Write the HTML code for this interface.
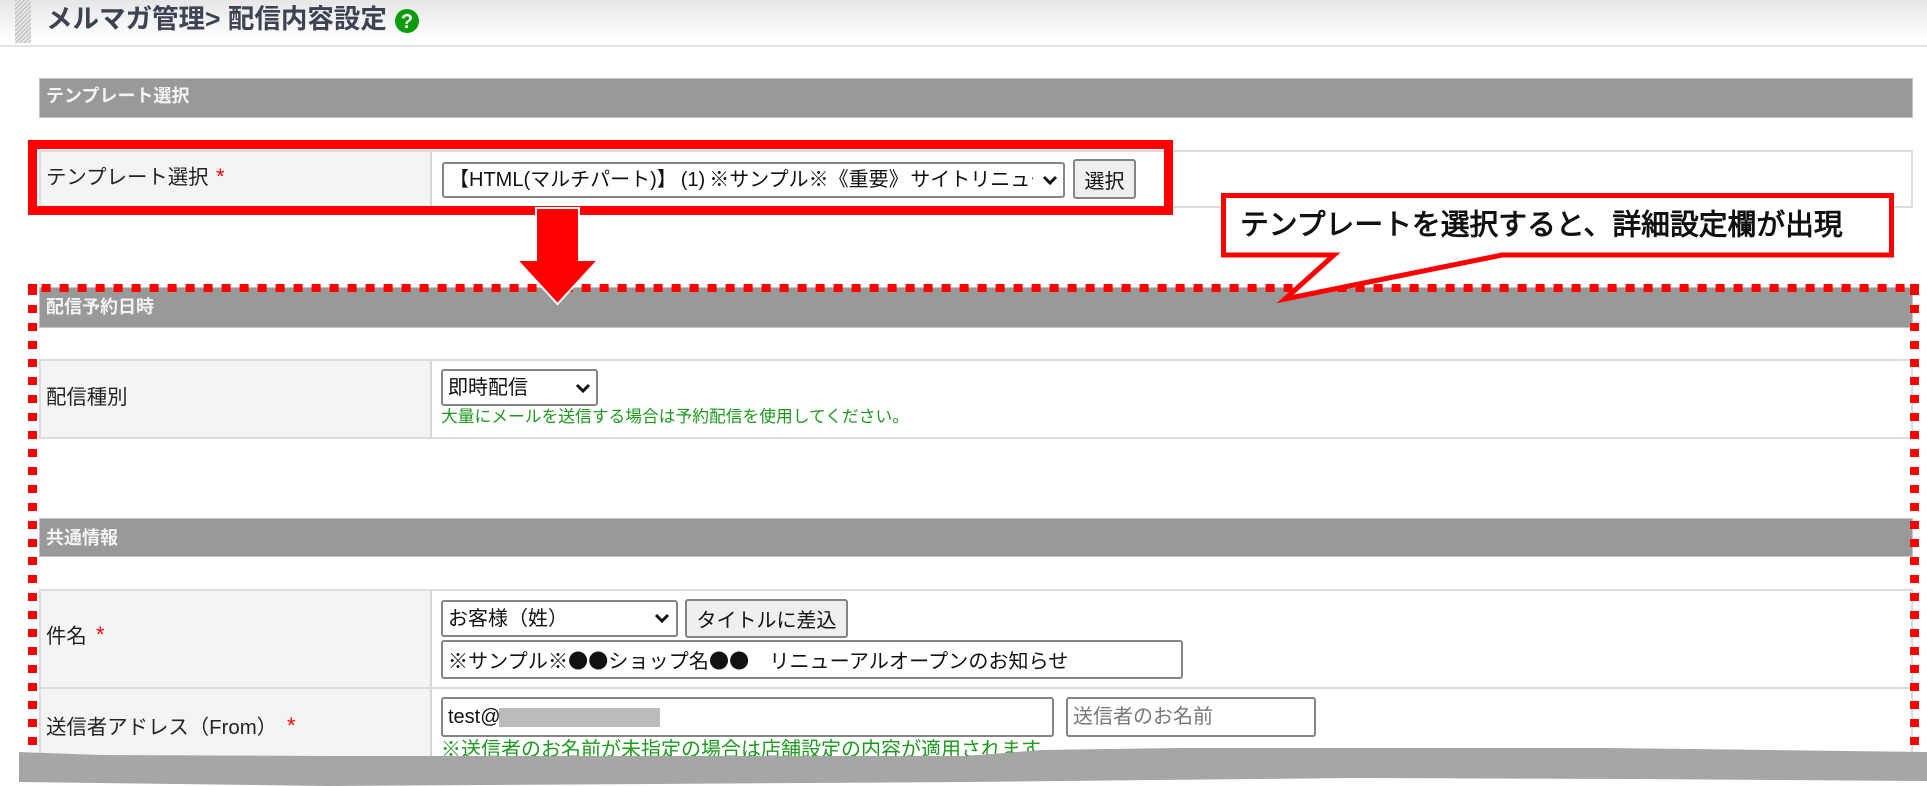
<!DOCTYPE html>
<html lang="ja">
<head>
<meta charset="utf-8">
<title>メルマガ管理</title>
<style>
html,body{margin:0;padding:0;background:#fff}
body{position:relative;width:1927px;height:786px;overflow:hidden;font-family:"Liberation Sans","Noto Sans CJK JP",sans-serif;color:#222}
.a{position:absolute;box-sizing:border-box}
.t{position:absolute;white-space:nowrap;height:30px;line-height:30px;font-size:20px}
.l{font-size:20.4px}
.bar{position:absolute;left:39px;width:1874px;background:#999;border:1px solid #c4c4c4;box-sizing:border-box}
.bt{position:absolute;left:46px;white-space:nowrap;height:30px;line-height:30px;font-size:18px;font-weight:bold;color:#f4f4f4}
.row{position:absolute;left:39px;width:1874px;border:2px solid #dcdcdc;box-sizing:border-box;background:#fff}
.lab{position:absolute;left:0;top:0;bottom:0;width:389px;background:#f3f5f5;border-right:2px solid #d6d6d6}
.req{position:absolute;white-space:nowrap;height:30px;line-height:30px;color:#f00;font-size:22px}
select,input,button{position:absolute;box-sizing:border-box;margin:0;font-family:"Liberation Sans","Noto Sans CJK JP",sans-serif;font-size:20px;color:#111;outline:0}
select{appearance:none;-webkit-appearance:none;background:#fff;border:2px solid #858585;border-radius:3px;padding:0 30px 0 5px;line-height:30px}
input{background:#fff;border:2px solid #858585;border-radius:3px;padding:0 5px}
input::placeholder{color:#777;opacity:1}
button{background:#efefef;border:2px solid #858585;border-radius:3px;padding:0}
.g{color:#1d9a1d}
svg.chev{position:absolute;width:16px;height:10px}
</style>
</head>
<body>

<!-- header -->
<div class="a" style="left:0;top:0;width:1927px;height:47px;background:linear-gradient(#e6e6e6,#fff 88%);border-bottom:2px solid #e2e2ea"></div>
<div class="a" style="left:15px;top:0;width:16px;height:43px;background:repeating-linear-gradient(135deg,#c6c6c6 0 1.5px,#ececec 1.5px 3px)"></div>
<div class="t" style="left:46px;top:4px;font-size:26.5px;font-weight:bold;color:#3d4354">メルマガ管理&gt; 配信内容設定</div>
<svg class="a" style="left:394px;top:8px" width="26" height="26" viewBox="0 0 26 26">
<circle cx="13" cy="13" r="12" fill="#0a9c0a"/>
<text x="13" y="20" text-anchor="middle" font-family="Liberation Sans" font-weight="bold" font-size="20" fill="#fff">?</text>
</svg>

<!-- template section -->
<div class="bar" style="top:78px;height:40px"></div>
<div class="bt" style="top:81px">テンプレート選択</div>

<div class="row" style="top:150px;height:58px">
  <div class="lab"></div>
</div>
<div class="t l" style="left:46px;top:163px">テンプレート選択</div>
<div class="req" style="left:216px;top:162px">*</div>
<select style="left:442px;top:162px;width:623px;height:36px"><option>【HTML(マルチパート)】&#8201;(1)&#8201;※サンプル※《重要》&#8202;サイトリニューアルオープンのお知らせ</option></select>
<svg class="chev" style="left:1042px;top:175px" viewBox="0 0 16 10"><path d="M2 2 L8 8 L14 2" fill="none" stroke="#111" stroke-width="3"/></svg>
<button style="left:1073px;top:159px;width:63px;height:40px">選択</button>

<!-- delivery section -->
<div class="bar" style="top:287px;height:41px"></div>
<div class="bt" style="top:292px">配信予約日時</div>

<div class="row" style="top:359px;height:80px">
  <div class="lab"></div>
</div>
<div class="t l" style="left:46px;top:383px">配信種別</div>
<select style="left:441px;top:369px;width:157px;height:37px"><option>即時配信</option></select>
<svg class="chev" style="left:575px;top:383px" viewBox="0 0 16 10"><path d="M2 2 L8 8 L14 2" fill="none" stroke="#111" stroke-width="3"/></svg>
<div class="t g" style="left:441px;top:402px;font-size:16.75px">大量にメールを送信する場合は予約配信を使用してください。</div>

<!-- common section -->
<div class="bar" style="top:518px;height:39px"></div>
<div class="bt" style="top:523px">共通情報</div>

<div class="row" style="top:589px;height:100px">
  <div class="lab"></div>
</div>
<div class="row" style="top:687px;height:99px">
  <div class="lab"></div>
</div>
<div class="t l" style="left:46px;top:622px">件名</div>
<div class="req" style="left:96px;top:620px">*</div>
<select style="left:441px;top:600px;width:237px;height:37px"><option>お客様（姓）</option></select>
<svg class="chev" style="left:654px;top:613px" viewBox="0 0 16 10"><path d="M2 2 L8 8 L14 2" fill="none" stroke="#111" stroke-width="3"/></svg>
<button style="left:685px;top:599px;width:163px;height:39px">タイトルに差込</button>
<input style="left:441px;top:640px;width:742px;height:39px;font-family:'Noto Sans CJK JP',sans-serif;letter-spacing:.12px" value="※サンプル※●●ショップ名●●　リニューアルオープンのお知らせ">

<div class="t l" style="left:46px;top:713px">送信者アドレス（From）</div>
<div class="req" style="left:287px;top:711px">*</div>
<input style="left:441px;top:697px;width:613px;height:40px" value="test@">
<div class="a" style="left:499px;top:708px;width:161px;height:19px;background:#bbb"></div>
<input style="left:1066px;top:697px;width:250px;height:40px" placeholder="送信者のお名前">
<div class="t g" style="left:441px;top:735px">※送信者のお名前が未指定の場合は店舗設定の内容が適用されます。</div>

<!-- annotations -->
<svg class="a" style="left:0;top:0" width="1927" height="786" viewBox="0 0 1927 786">
  <!-- solid red frame -->
  <rect x="32.5" y="144.5" width="1136" height="66" fill="none" stroke="#f00" stroke-width="9"/>
  <!-- dotted frame -->
  <line x1="41.6" y1="288" x2="1910" y2="288" stroke="#f00" stroke-width="8" stroke-dasharray="9 9"/>
  <line x1="32.5" y1="284" x2="32.5" y2="295" stroke="#f00" stroke-width="9"/>
  <line x1="32.5" y1="305" x2="32.5" y2="760" stroke="#f00" stroke-width="9" stroke-dasharray="8 10"/>
  <line x1="1914.5" y1="284" x2="1914.5" y2="295" stroke="#f00" stroke-width="9"/>
  <line x1="1914.5" y1="305" x2="1914.5" y2="760" stroke="#f00" stroke-width="9" stroke-dasharray="8 10"/>
  <!-- callout -->
  <polygon points="1223.5,195.5 1891.5,195.5 1891.5,255 1502,255 1285,299 1334,255 1223.5,255" fill="#fff" stroke="#f00" stroke-width="5" stroke-miterlimit="10"/>
  <text x="1240" y="234.5" font-family="Liberation Sans, Noto Sans CJK JP, sans-serif" font-size="28.8" fill="#111" stroke="#111" stroke-width="0.9">テンプレートを選択すると、詳細設定欄が出現</text>
  <!-- arrow -->
  <polygon points="536,208 579,208 579,260 598,260 557.5,304 517,260 536,260" fill="#f00" stroke="#fff" stroke-width="2"/>
  <!-- white below band -->
  <polygon points="0,770 1927,770 1927,786 0,786" fill="#fff"/>
  <!-- torn band -->
  <polygon points="19,752 100,755 330,756 966,756 1042,750 1180,748 1606,748 1927,752 1927,781 1635,779 1354,778 966,782 330,786 19,782" fill="#a6a6a6"/>
</svg>

</body>
</html>
